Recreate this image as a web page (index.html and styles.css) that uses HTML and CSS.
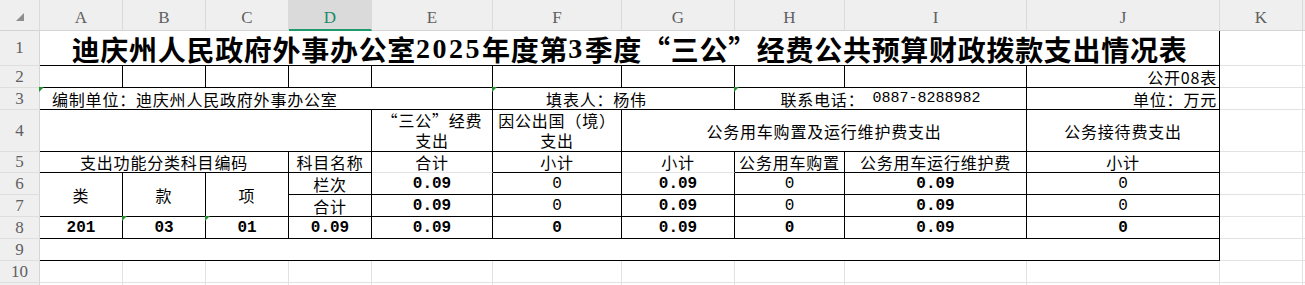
FILE: index.html
```html
<!DOCTYPE html>
<html lang="zh-CN">
<head>
<meta charset="utf-8">
<title>迪庆州人民政府外事办公室“三公”经费公共预算财政拨款支出情况表</title>
<link rel="stylesheet" href="styles.css">
</head>
<body>
<div class="sheet">
  <!-- column headers -->
  <div class="h corner"><span class="corner-mark"></span></div>
  <div class="h">A</div>
  <div class="h">B</div>
  <div class="h">C</div>
  <div class="h sel">D</div>
  <div class="h">E</div>
  <div class="h">F</div>
  <div class="h">G</div>
  <div class="h">H</div>
  <div class="h">I</div>
  <div class="h">J</div>
  <div class="h">K</div>
  <div class="h"></div>

  <!-- row 1 -->
  <div class="rn">1</div>
  <div class="c title bb br span10">迪庆州人民政府外事办公室<span class="tdig">2025</span>年度第<span class="tdig">3</span>季度“三公”经费公共预算财政拨款支出情况表</div>
  <div class="c"></div>
  <div class="c"></div>

  <!-- row 2 -->
  <div class="rn">2</div>
  <div class="c br bb"></div>
  <div class="c br bb"></div>
  <div class="c br bb"></div>
  <div class="c br bb"></div>
  <div class="c br bb"></div>
  <div class="c br bb"></div>
  <div class="c br bb"></div>
  <div class="c br bb"></div>
  <div class="c br bb"></div>
  <div class="c br bb r">公开08表</div>
  <div class="c"></div>
  <div class="c"></div>

  <!-- row 3 -->
  <div class="rn">3</div>
  <div class="c br bb l tri span5">编制单位：迪庆州人民政府外事办公室</div>
  <div class="c br bb tri span2 shift">填表人：杨伟</div>
  <div class="c br bb tri span2">联系电话：<span class="num phone">0887-8288982</span></div>
  <div class="c br bb r">单位：万元</div>
  <div class="c"></div>
  <div class="c"></div>

  <!-- row 4 -->
  <div class="rn">4</div>
  <div class="c br bb span4"></div>
  <div class="c br bb wrap"><span class="line">“三公”经费</span><span class="line">支出</span></div>
  <div class="c br bb wrap"><span class="line">因公出国（境）</span><span class="line">支出</span></div>
  <div class="c br bb span3">公务用车购置及运行维护费支出</div>
  <div class="c br bb">公务接待费支出</div>
  <div class="c"></div>
  <div class="c"></div>

  <!-- row 5 -->
  <div class="rn">5</div>
  <div class="c br bb span3">支出功能分类科目编码</div>
  <div class="c br bb">科目名称</div>
  <div class="c br">合计</div>
  <div class="c br bb">小计</div>
  <div class="c br">小计</div>
  <div class="c br bb">公务用车购置</div>
  <div class="c br bb">公务用车运行维护费</div>
  <div class="c br bb">小计</div>
  <div class="c"></div>
  <div class="c"></div>

  <!-- row 6 -->
  <div class="rn">6</div>
  <div class="c br bb rspan2">类</div>
  <div class="c br bb rspan2">款</div>
  <div class="c br bb rspan2">项</div>
  <div class="c br bb">栏次</div>
  <div class="c br bb num b">0.09</div>
  <div class="c br bb num">0</div>
  <div class="c br bb num b">0.09</div>
  <div class="c br bb num">0</div>
  <div class="c br bb num b">0.09</div>
  <div class="c br bb num">0</div>
  <div class="c"></div>
  <div class="c"></div>

  <!-- row 7 -->
  <div class="rn">7</div>
  <div class="c br bb">合计</div>
  <div class="c br bb num b">0.09</div>
  <div class="c br bb num">0</div>
  <div class="c br bb num b">0.09</div>
  <div class="c br bb num">0</div>
  <div class="c br bb num b">0.09</div>
  <div class="c br bb num">0</div>
  <div class="c"></div>
  <div class="c"></div>

  <!-- row 8 -->
  <div class="rn">8</div>
  <div class="c br bb num b">201</div>
  <div class="c br bb num b tri">03</div>
  <div class="c br bb num b tri">01</div>
  <div class="c br bb num b">0.09</div>
  <div class="c br bb num b">0.09</div>
  <div class="c br bb num b">0</div>
  <div class="c br bb num b">0.09</div>
  <div class="c br bb num b">0</div>
  <div class="c br bb num b">0.09</div>
  <div class="c br bb num b">0</div>
  <div class="c"></div>
  <div class="c"></div>

  <!-- row 9 -->
  <div class="rn">9</div>
  <div class="c br bb span10"></div>
  <div class="c"></div>
  <div class="c"></div>

  <!-- row 10 -->
  <div class="rn">10</div>
  <div class="c"></div>
  <div class="c"></div>
  <div class="c"></div>
  <div class="c"></div>
  <div class="c"></div>
  <div class="c"></div>
  <div class="c"></div>
  <div class="c"></div>
  <div class="c"></div>
  <div class="c"></div>
  <div class="c"></div>
  <div class="c"></div>

  <!-- row 11 (only a sliver visible) -->
  <div class="rn"></div>
  <div class="c"></div>
  <div class="c"></div>
  <div class="c"></div>
  <div class="c"></div>
  <div class="c"></div>
  <div class="c"></div>
  <div class="c"></div>
  <div class="c"></div>
  <div class="c"></div>
  <div class="c"></div>
  <div class="c"></div>
  <div class="c"></div>
</div>
</body>
</html>
```

FILE: styles.css
```css
* {
  box-sizing: border-box;
}

html,
body {
  margin: 0;
  padding: 0;
  background: #ffffff;
  overflow: hidden;
}

body {
  font-family: "Noto Sans CJK SC", sans-serif;
  color: #000000;
}

.sheet {
  display: grid;
  grid-template-columns: 40px 83px 83px 83px 83px 121px 129px 113px 110px 182px 193px 83px 100px;
  grid-template-rows: 31px 35px 22px 22px 42px 21px 22px 22px 22px 22px 22px 22px;
  width: 1305px;
  height: 285px;
  overflow: hidden;
}

/* column headers */
.h {
  display: flex;
  align-items: center;
  justify-content: center;
  padding-top: 6px;
  background: #efefef;
  border-right: 1px solid #dadada;
  border-bottom: 1px solid #d4d4d4;
  font-family: "Liberation Serif", serif;
  font-size: 17px;
  color: #606060;
}

.h.sel {
  background: #dadada;
  color: #1d8a66;
  border-bottom: 2px solid #1f9a6c;
}

.corner {
  align-items: center;
  padding-top: 4px;
}

.corner-mark {
  width: 0;
  height: 0;
  border-left: 8px solid transparent;
  border-bottom: 8px solid #8e8e8e;
}

/* row numbers */
.rn {
  display: flex;
  align-items: center;
  justify-content: center;
  background: #efefef;
  border-right: 1px solid #d6d6d6;
  border-bottom: 1px solid #dedede;
  font-family: "Liberation Serif", serif;
  font-size: 17px;
  color: #606060;
}

/* cells */
.c {
  position: relative;
  display: flex;
  align-items: center;
  justify-content: center;
  text-align: center;
  border-right: 1px solid #e2e2e2;
  border-bottom: 1px solid #e2e2e2;
  font-size: 16px;
  letter-spacing: 0.8px;
  line-height: 20px;
  white-space: nowrap;
}

.br {
  border-right-color: #000000;
}

.bb {
  border-bottom-color: #000000;
}

.span2 { grid-column: span 2; }
.span3 { grid-column: span 3; }
.span4 { grid-column: span 4; }
.span5 { grid-column: span 5; }
.span10 { grid-column: span 10; }
.rspan2 { grid-row: span 2; }

.l {
  justify-content: flex-start;
  padding-left: 12px;
}

.r {
  justify-content: flex-end;
  padding-right: 2px;
}

.shift {
  padding-right: 34px;
}

.wrap {
  flex-direction: column;
  padding-bottom: 1px;
}

.line {
  display: block;
  height: 20px;
  line-height: 20px;
}

.title {
  font-size: 28px;
  font-weight: 700;
  letter-spacing: 0.7px;
  line-height: 32px;
  padding-top: 2px;
}

.tdig {
  font-family: "Liberation Serif", serif;
  letter-spacing: 2.5px;
}

.num {
  font-family: "Liberation Mono", monospace;
  letter-spacing: 0;
}

.phone {
  font-size: 15px;
  margin-left: 8px;
}

.b {
  font-weight: 700;
}

/* green "number stored as text" markers */
.tri::before {
  content: "";
  position: absolute;
  top: -1px;
  left: -1px;
  width: 0;
  height: 0;
  border-top: 5px solid #22902e;
  border-right: 5px solid transparent;
}
```
